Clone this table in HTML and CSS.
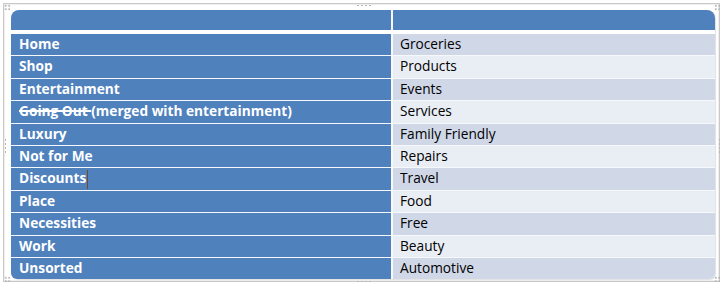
FILE: index.html
```html
<!DOCTYPE html>
<html>
<head>
<meta charset="utf-8">
<link rel="stylesheet" href="styles.css">
</head>
<body>
<div class="frame">
  <span class="grip grip-top"></span>
  <span class="grip grip-bottom"></span>
  <span class="grip grip-left"></span>
  <span class="grip grip-right"></span>
  <span class="corner corner-tl"></span>
  <span class="corner corner-tr"></span>
  <span class="corner corner-bl"></span>
  <span class="corner corner-br"></span>
  <div class="table">
    <div class="head"></div><div class="head"></div>
    <div class="spacer"></div>
    <div class="cell key">Home</div><div class="cell val odd">Groceries</div>
    <div class="cell key">Shop</div><div class="cell val even">Products</div>
    <div class="cell key">Entertainment</div><div class="cell val odd">Events</div>
    <div class="cell key"><s>Going Out </s>(merged with entertainment)</div><div class="cell val even">Services</div>
    <div class="cell key">Luxury</div><div class="cell val odd">Family Friendly</div>
    <div class="cell key">Not for Me</div><div class="cell val even">Repairs</div>
    <div class="cell key">Discounts<span class="caret"></span></div><div class="cell val odd">Travel</div>
    <div class="cell key">Place</div><div class="cell val even">Food</div>
    <div class="cell key">Necessities</div><div class="cell val odd">Free</div>
    <div class="cell key">Work</div><div class="cell val even">Beauty</div>
    <div class="cell key">Unsorted</div><div class="cell val odd">Automotive</div>
  </div>
</div>
</body>
</html>
```

FILE: styles.css
```css
html, body {
  margin: 0;
  padding: 0;
  background: #ffffff;
}

body {
  padding: 3px 0 0 3px;
  font-family: "Open Sans", "Lato", sans-serif;
}

.frame {
  position: relative;
  width: 704px;
  height: 269px;
  padding: 6px 4px 2px 7px;
  border: 1px solid #c9c9c9;
  box-shadow: inset 0 0 0 1px #efefef;
  background: #ffffff;
}

.table {
  display: grid;
  grid-template-columns: 380px 1fr;
  grid-template-rows: 20px 2px repeat(11, 21.4px);
  column-gap: 2px;
  row-gap: 1px;
  background: #f7f8fb;
  border-radius: 8px 8px 6px 6px;
  overflow: hidden;
  box-shadow: 1px 1px 1px rgba(0, 0, 0, 0.12);
}

.head {
  background: #4f81bd;
}

.spacer {
  grid-column: 1 / 3;
  background: #ffffff;
  margin: -1px 0;
}

.cell {
  font-size: 13.7px;
  line-height: 20.4px;
  padding-bottom: 1px;
  white-space: nowrap;
  overflow: hidden;
}

.key {
  background: #4f81bd;
  color: #ffffff;
  font-weight: 700;
  padding-left: 8px;
}

.key s {
  text-decoration-thickness: 1.5px;
}

.val {
  color: #000000;
  padding-left: 7px;
}

.odd {
  background: #d0d8e8;
}

.even {
  background: #e9edf4;
}

.caret {
  display: inline-block;
  width: 1px;
  height: 19px;
  margin-left: 1px;
  vertical-align: middle;
  background: #7a4a1e;
}

.grip {
  position: absolute;
  background-image: radial-gradient(circle, #b5b5b5 0.8px, transparent 1px);
}

.grip-top {
  top: 0;
  left: 352px;
  width: 16px;
  height: 3px;
  background-size: 4px 3px;
}

.grip-bottom {
  bottom: -2px;
  left: 352px;
  width: 16px;
  height: 3px;
  background-size: 4px 3px;
}

.grip-left {
  left: 0;
  top: 134px;
  width: 3px;
  height: 16px;
  background-size: 3px 4px;
}

.grip-right {
  right: -2px;
  top: 134px;
  width: 3px;
  height: 16px;
  background-size: 3px 4px;
}

.corner {
  position: absolute;
  width: 7px;
  height: 7px;
  background-image: radial-gradient(circle, #b5b5b5 0.8px, transparent 1px);
  background-size: 3.5px 3.5px;
}

.corner-tl { top: 0; left: 0; }
.corner-tr { top: 0; right: -2px; }
.corner-bl { bottom: -2px; left: 0; }
.corner-br { bottom: -2px; right: -2px; }
```
